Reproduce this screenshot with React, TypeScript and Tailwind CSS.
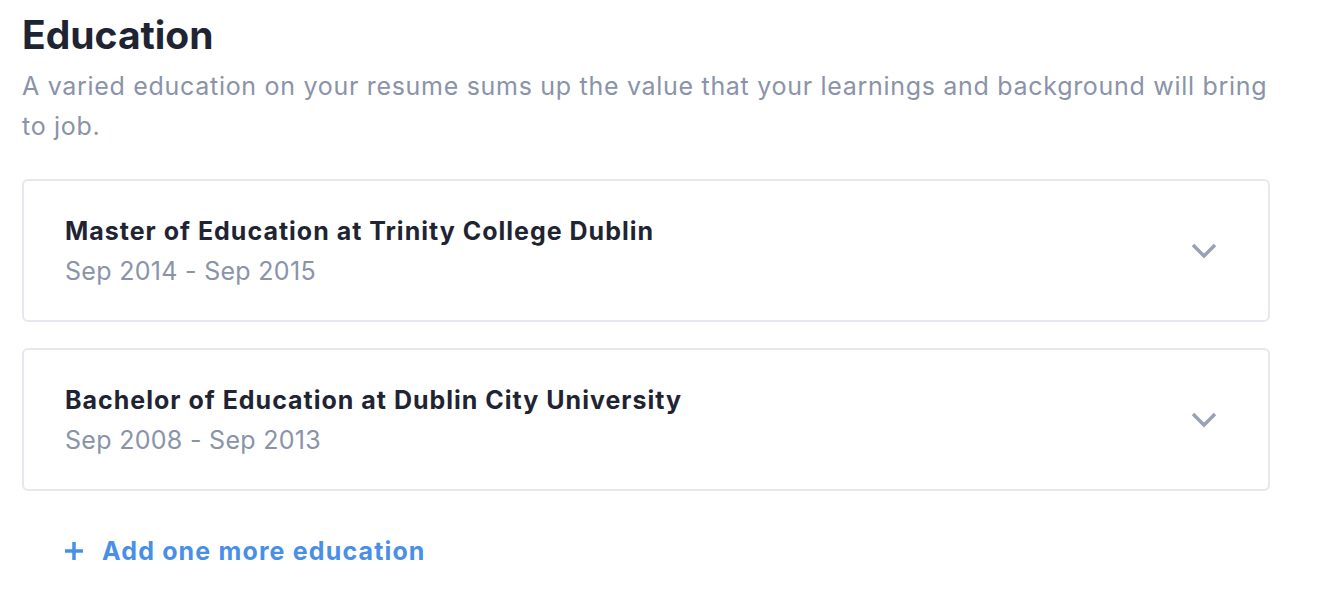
const items = [
  { title: 'Master of Education at Trinity College Dublin', dates: 'Sep 2014 - Sep 2015' },
  { title: 'Bachelor of Education at Dublin City University', dates: 'Sep 2008 - Sep 2013' },
];

function Chevron() {
  return (
    <svg width="26" height="16" viewBox="0 0 26 16" fill="none" className="text-[#9aa1b5]">
      <path d="M2 2l11 11L24 2" stroke="currentColor" strokeWidth="3.5" />
    </svg>
  );
}

export default function App() {
  return (
    <div className="bg-white min-h-screen pl-[22px] pt-[10px]" style={{ fontFamily: 'Inter, "Open Sans", sans-serif' }}>
      <div className="w-[1248px]">
        <h1 className="text-[39px] leading-[50px] font-bold text-[#1f2433]">Education</h1>
        <p className="text-[25px] leading-[40px] tracking-[0.7px] text-[#8a93a9] mt-[6px] w-[1264px]">
          A varied education on your resume sums up the value that your learnings and background will bring to job.
        </p>

        <div className="mt-[33px] flex flex-col gap-[26px]">
          {items.map((item) => (
            <div key={item.title} className="flex items-center justify-between border-2 border-[#e6e8f0] rounded-[6px] h-[143px] pl-[41px] pr-[51px]">
              <div>
                <div className="text-[25px] leading-[36px] font-bold tracking-[1px] text-[#1f2433]">{item.title}</div>
                <div className="text-[25px] leading-[36px] tracking-[0.3px] text-[#8a93a9] mt-[4px]">{item.dates}</div>
              </div>
              <Chevron />
            </div>
          ))}
        </div>

        <button className="mt-[42px] ml-[43px] flex items-center gap-[19px] text-[#4a8fe7] text-[25px] leading-[36px] font-bold tracking-[1.15px]">
          <svg width="18" height="18" viewBox="0 0 18 18">
            <path d="M9 0v18M0 9h18" stroke="currentColor" strokeWidth="3.5" />
          </svg>
          Add one more education
        </button>
      </div>
    </div>
  );
}
